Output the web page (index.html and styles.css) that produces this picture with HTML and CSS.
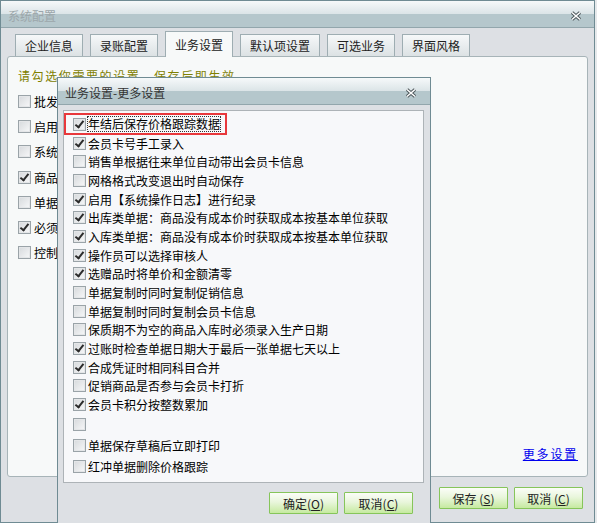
FILE: index.html
```html
<!DOCTYPE html>
<html>
<head>
	<meta charset="utf-8">
	<title>系统配置</title>
	<link rel="stylesheet" href="styles.css">
</head>
<body>

	<div class="win">
		<div class="titlebar">
			<span class="title dim">系统配置</span>
			<span class="close">
				<svg width="12" height="10" viewBox="0 0 12 10"><path d="M2 1.5L10 8.5M10 1.5L2 8.5" stroke="#4a5458" stroke-width="3.4" fill="none"/><path d="M2 1.5L10 8.5M10 1.5L2 8.5" stroke="#fff" stroke-width="1.6" fill="none"/></svg>
			</span>
		</div>

		<div class="tabs">
			<div class="tab">企业信息</div>
			<div class="tab">录账配置</div>
			<div class="tab active">业务设置</div>
			<div class="tab">默认项设置</div>
			<div class="tab">可选业务</div>
			<div class="tab">界面风格</div>
		</div>

		<div class="panel">
			<div class="hint">请勾选你需要的设置，保存后即生效。</div>
			<div class="opts">
				<div class="opt"><span class="cb"></span>批发</div>
				<div class="opt"><span class="cb"></span>启用</div>
				<div class="opt"><span class="cb"></span>系统</div>
				<div class="opt"><span class="cb on"></span>商品</div>
				<div class="opt"><span class="cb"></span>单据</div>
				<div class="opt"><span class="cb on"></span>必须</div>
				<div class="opt"><span class="cb"></span>控制</div>
			</div>
			<a class="more" href="#">更多设置</a>
		</div>

		<div class="footer">
			<button class="btn">保存 (<u>S</u>)</button>
			<button class="btn">取消 (<u>C</u>)</button>
		</div>
	</div>

	<!-- 弹出窗口：更多设置 -->
	<div class="dialog">
		<div class="titlebar">
			<span class="title">业务设置-更多设置</span>
			<span class="close">
				<svg width="12" height="10" viewBox="0 0 12 10"><path d="M2 1.5L10 8.5M10 1.5L2 8.5" stroke="#4a5458" stroke-width="3.4" fill="none"/><path d="M2 1.5L10 8.5M10 1.5L2 8.5" stroke="#fff" stroke-width="1.6" fill="none"/></svg>
			</span>
		</div>

		<div class="list">
			<div class="row mark"><span class="cb on"></span><span class="focus">年结后保存价格跟踪数据</span></div>
			<div class="row"><span class="cb on"></span>会员卡号手工录入</div>
			<div class="row"><span class="cb"></span>销售单根据往来单位自动带出会员卡信息</div>
			<div class="row"><span class="cb"></span>网格格式改变退出时自动保存</div>
			<div class="row"><span class="cb on"></span>启用【系统操作日志】进行纪录</div>
			<div class="row"><span class="cb on"></span>出库类单据：商品没有成本价时获取成本按基本单位获取</div>
			<div class="row"><span class="cb on"></span>入库类单据：商品没有成本价时获取成本按基本单位获取</div>
			<div class="row"><span class="cb on"></span>操作员可以选择审核人</div>
			<div class="row"><span class="cb on"></span>选赠品时将单价和金额清零</div>
			<div class="row"><span class="cb"></span>单据复制时同时复制促销信息</div>
			<div class="row"><span class="cb"></span>单据复制时同时复制会员卡信息</div>
			<div class="row"><span class="cb"></span>保质期不为空的商品入库时必须录入生产日期</div>
			<div class="row"><span class="cb on"></span>过账时检查单据日期大于最后一张单据七天以上</div>
			<div class="row"><span class="cb on"></span>合成凭证时相同科目合并</div>
			<div class="row"><span class="cb"></span>促销商品是否参与会员卡打折</div>
			<div class="row"><span class="cb on"></span>会员卡积分按整数累加</div>
			<div class="row tall"><span class="cb"></span></div>
			<div class="row tall"><span class="cb"></span>单据保存草稿后立即打印</div>
			<div class="row tall"><span class="cb"></span>红冲单据删除价格跟踪</div>
		</div>

		<div class="footer">
			<button class="btn">确定(<u>O</u>)</button>
			<button class="btn">取消(<u>C</u>)</button>
		</div>
	</div>

</body>
</html>
```

FILE: styles.css
```css
body {
	margin: 0;
	width: 597px;
	height: 523px;
	overflow: hidden;
	position: relative;
	background: #e6e9eb;
	font: 12px "Noto Sans CJK SC", "Liberation Sans", sans-serif;
	color: #000;
}

.win {
	width: 595px;
	height: 523px;
	box-sizing: border-box;
	border: 1px solid #6f8b93;
	background: #dde0e4;
	display: flex;
	flex-direction: column;
}

/* заголовок окна */
.titlebar {
	flex: none;
	height: 26px;
	display: flex;
	align-items: center;
	justify-content: space-between;
	padding: 0 12px 0 7px;
	background: linear-gradient(to bottom, #f6f9fa 0, #dbe4e7 13px, #b5c7cc 13px, #b5c7cc 100%);
	border-bottom: 1px solid #92a6ac;
}

.title {
	font-size: 12px;
	color: #333;
	padding-top: 2px;
}

.title.dim {
	color: #9ca6aa;
}

.close {
	display: flex;
	padding-top: 4px;
}

.tabs {
	display: flex;
	align-items: flex-end;
	gap: 7px;
	height: 28px;
	padding-left: 14px;
	position: relative;
	z-index: 1;
}

.tab {
	height: 21px;
	padding: 0 9px;
	border: 1px solid #9eadb2;
	border-bottom: 0;
	background: linear-gradient(to bottom, #f6f8f9, #dce2e4);
	display: flex;
	align-items: center;
	color: #222;
}

.tab.active {
	height: 25px;
	margin-bottom: -1px;
	background: #f7f9f9;
}

.panel {
	height: 419px;
	margin: 0 6px;
	border: 1px solid #a7b4b8;
	border-radius: 3px;
	background: #f7f9f9;
	display: flex;
	flex-direction: column;
	padding: 0 9px 0 10px;
}

.hint {
	margin-top: 10px;
	color: #808000;
	letter-spacing: 1.6px;
	line-height: 18px;
}

.opts {
	margin-top: 4px;
}

.opt {
	height: 25.2px;
	display: flex;
	align-items: center;
	gap: 3px;
}

.more {
	margin-top: auto;
	margin-bottom: 14px;
	align-self: flex-end;
	color: #0000ee;
	letter-spacing: 1.8px;
}

.footer {
	display: flex;
	justify-content: flex-end;
	gap: 6px;
	margin-top: 10px;
	padding-right: 11px;
}

.btn {
	width: 69px;
	height: 22px;
	padding: 0;
	border: 1px solid #86c55a;
	border-radius: 1px;
	background: linear-gradient(to bottom, #fbfdf8 0, #e9f6dc 45%, #c6eaa0 100%);
	font: 12px "Noto Sans CJK SC", "Liberation Sans", sans-serif;
	color: #222;
}

/* чекбокс */
.cb {
	flex: none;
	position: relative;
	width: 11px;
	height: 11px;
	border: 1px solid #9aa3a8;
	box-shadow: inset 0 0 0 1px #e4e6e8;
	background: linear-gradient(135deg, #d6d9dc, #f7f8f9);
}

.cb.on::after {
	content: "";
	position: absolute;
	left: 3px;
	top: 0px;
	width: 3px;
	height: 7px;
	border: solid #2b2b2b;
	border-width: 0 2px 2px 0;
	transform: rotate(38deg);
}

.dialog {
	position: absolute;
	left: 57px;
	top: 77px;
	width: 374px;
	height: 460px;
	box-sizing: border-box;
	border: 1px solid #6f8b93;
	background: #dde0e4;
}

.dialog .titlebar {
	padding-right: 13px;
}

.dialog .footer {
	padding-right: 17px;
	margin-top: 9px;
}

.list {
	height: 367px;
	margin: 5px 6px 0 5px;
	padding: 4px 0 0 9px;
	border: 1px solid #adb3b7;
	background: #f7f8fa;
}

.row {
	position: relative;
	height: 18.7px;
	display: flex;
	align-items: center;
	gap: 2px;
}

.row.tall {
	height: 21px;
}

.row.mark::before {
	content: "";
	position: absolute;
	left: -9px;
	top: -2px;
	width: 159px;
	height: 18px;
	border: 2px solid #e8383c;
}

.focus {
	outline: 1px dotted #333;
	line-height: 14px;
}
```
